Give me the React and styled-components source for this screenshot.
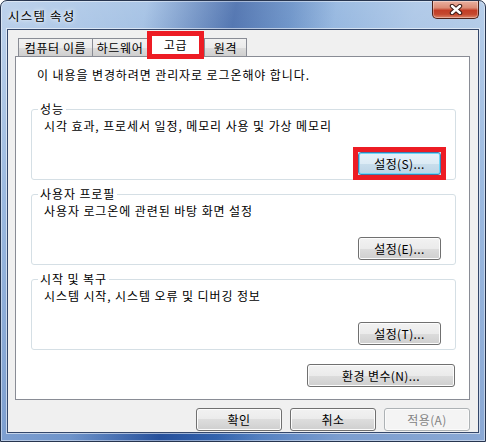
import React from "react";
import styled, { createGlobalStyle, css } from "styled-components";

const GlobalStyle = createGlobalStyle`
  html, body { margin: 0; padding: 0; background: #ffffff; }
  body {
    font-family: "Noto Sans CJK KR", "Liberation Sans", sans-serif;
    font-size: 12px;
    color: #000;
  }
  * { box-sizing: border-box; }
`;

const Window = styled.div`
  width: 486px;
  height: 442px;
  display: flex;
  flex-direction: column;
  border: 1px solid #27354f;
  border-radius: 7px 7px 0 0;
  background:
    linear-gradient(100deg,
      rgba(255,255,255,0.42) 0%,
      rgba(255,255,255,0.25) 26%,
      rgba(0,30,110,0.38) 42%,
      rgba(0,40,120,0.18) 52%,
      rgba(255,255,255,0.12) 60%,
      rgba(255,255,255,0.32) 74%,
      rgba(255,255,255,0.4) 100%),
    linear-gradient(#8fb3de, #5f8fcd 45%, #3d6fb8 100%);
  box-shadow: inset 0 0 0 1px rgba(255,255,255,0.45);
`;

const TitleBar = styled.div`
  height: 28px;
  display: flex;
  align-items: flex-start;
  justify-content: space-between;
  padding-left: 7px;
  padding-right: 6px;
`;

const Title = styled.div`
  margin-top: 7px;
  line-height: 16px;
  font-size: 12.5px;
  letter-spacing: 1.2px;
  color: #000;
  text-shadow: 0 0 6px rgba(255,255,255,0.95), 0 0 3px rgba(255,255,255,0.9);
`;

const CloseButton = styled.div`
  width: 47px;
  height: 18px;
  display: flex;
  align-items: center;
  justify-content: center;
  border: 1px solid #4d2119;
  border-top: none;
  border-radius: 0 0 5px 5px;
  background: linear-gradient(#eab0a0 0%, #dc8c76 40%, #c33d26 55%, #c4482f 78%, #dc8468 100%);
  box-shadow: inset 0 0 0 1px rgba(255,255,255,0.35);
`;

const Client = styled.div`
  flex: 1;
  margin: 0 6px 8px 6px;
  border: 1px solid #34476a;
  box-shadow: 0 0 0 1px rgba(255,255,255,0.55);
  background: #f0f0f0;
  padding: 4px 8px 0 7px;
  display: flex;
  flex-direction: column;
  letter-spacing: 0.9px;
`;

const TabStrip = styled.div`
  height: 22px;
  display: flex;
  align-items: flex-end;
  padding-left: 3px;
`;

const Tab = styled.div`
  position: relative;
  width: ${(p) => p.$w}px;
  height: 18px;
  margin-left: ${(p) => (p.$overlap ? -1 : 0)}px;
  display: flex;
  align-items: center;
  justify-content: center;
  line-height: 14px;
  padding-top: 1px;
  border: 1px solid #898c95;
  border-bottom: none;
  background: linear-gradient(#f2f2f2 0%, #ebebeb 50%, #dddddd 50%, #cfcfcf 100%);
  white-space: nowrap;
  letter-spacing: 0.6px;
  ${(p) =>
    p.$selected &&
    css`
      height: 23px;
      margin-bottom: -1px;
      z-index: 2;
      background: #ffffff;
      padding-top: 0;
      padding-bottom: 2px;
    `}
`;

const Highlight = styled.div`
  position: absolute;
  top: ${(p) => p.$t}px;
  bottom: ${(p) => p.$b}px;
  left: ${(p) => p.$l}px;
  right: ${(p) => p.$r}px;
  border: 5px solid #ed1c24;
  pointer-events: none;
  z-index: 3;
`;

const Panel = styled.div`
  height: 344px;
  border: 1px solid #898c95;
  background: #ffffff;
  padding: 11px 13px 0 15px;
  display: flex;
  flex-direction: column;
`;

const Notice = styled.div`
  line-height: 14px;
  padding-left: 6px;
  white-space: nowrap;
`;

const Group = styled.fieldset`
  margin: ${(p) => (p.$first ? 20 : 7)}px 0 0 0;
  padding: 0;
  min-width: 0;
  border: 1px solid #d5dfe5;
  border-radius: 3px;
`;

const Legend = styled.legend`
  margin-left: 6px;
  padding: 0 2px;
  line-height: 14px;
  font-size: 12px;
`;

const GroupBody = styled.div`
  padding: 3px 14px 4px 12px;
  display: flex;
  flex-direction: column;
`;

const GroupText = styled.div`
  line-height: 14px;
  white-space: nowrap;
`;

const ButtonRow = styled.div`
  display: flex;
  justify-content: flex-end;
  gap: 8px;
  margin-top: ${(p) => p.$mt || 0}px;
  padding-right: ${(p) => p.$pr || 0}px;
`;

const Button = styled.div`
  position: relative;
  width: ${(p) => p.$w}px;
  height: 23px;
  display: flex;
  align-items: center;
  justify-content: center;
  line-height: 14px;
  letter-spacing: 0.4px;
  border: 1px solid #707070;
  border-radius: 3px;
  background: linear-gradient(#f2f2f2 0%, #ebebeb 50%, #dddddd 50%, #cfcfcf 100%);
  box-shadow: inset 0 0 0 1px #fcfcfc;
  white-space: nowrap;
  ${(p) =>
    p.$focused &&
    css`
      border-color: #3c7fb1;
      background: linear-gradient(#e7f2f9 0%, #dcebf5 50%, #c9deec 50%, #bcd4e6 100%);
      box-shadow: inset 0 0 0 1px #6fd6f7, 0 0 0 1px #b9ecfb;
    `}
  ${(p) =>
    p.$disabled &&
    css`
      border-color: #adb2b5;
      background: #f4f4f4;
      box-shadow: inset 0 0 0 1px #fbfbfb;
      color: #838383;
    `}
`;

const CloseGlyph = () => (
  <svg width="14" height="11" viewBox="0 0 14 11">
    <path d="M3 2 L11 9 M11 2 L3 9" stroke="#3b1a16" strokeWidth="4.4" strokeLinecap="round" fill="none" />
    <path d="M3 2 L11 9 M11 2 L3 9" stroke="#ffffff" strokeWidth="2.4" strokeLinecap="round" fill="none" />
  </svg>
);

const groups = [
  { title: "성능", text: "시각 효과, 프로세서 일정, 메모리 사용 및 가상 메모리", button: "설정(S)...", focused: true },
  { title: "사용자 프로필", text: "사용자 로그온에 관련된 바탕 화면 설정", button: "설정(E)..." },
  { title: "시작 및 복구", text: "시스템 시작, 시스템 오류 및 디버깅 정보", button: "설정(T)..." },
];

export default function App() {
  return (
    <>
      <GlobalStyle />
      <Window>
        <TitleBar>
          <Title>시스템 속성</Title>
          <CloseButton>
            <CloseGlyph />
          </CloseButton>
        </TitleBar>
        <Client>
          <TabStrip>
            <Tab $w={75}>컴퓨터 이름</Tab>
            <Tab $w={56} $overlap>하드웨어</Tab>
            <Tab $w={57} $overlap $selected>
              고급
              <Highlight $t={-4} $b={-2} $l={-1} $r={-1} />
            </Tab>
            <Tab $w={43}>원격</Tab>
          </TabStrip>
          <Panel>
            <Notice>이 내용을 변경하려면 관리자로 로그온해야 합니다.</Notice>
            {groups.map((g, i) => (
              <Group key={g.title} $first={i === 0}>
                <Legend>{g.title}</Legend>
                <GroupBody>
                  <GroupText>{g.text}</GroupText>
                  <ButtonRow $mt={19}>
                    <Button $w={83} $focused={g.focused}>
                      {g.button}
                      {g.focused && <Highlight $t={-6} $b={-6} $l={-6} $r={-6} />}
                    </Button>
                  </ButtonRow>
                </GroupBody>
              </Group>
            ))}
            <ButtonRow $mt={14} $pr={1}>
              <Button $w={148}>환경 변수(N)...</Button>
            </ButtonRow>
          </Panel>
          <ButtonRow $mt={8} $pr={0}>
            <Button $w={86}>확인</Button>
            <Button $w={86}>취소</Button>
            <Button $w={86} $disabled>적용(A)</Button>
          </ButtonRow>
        </Client>
      </Window>
    </>
  );
}
